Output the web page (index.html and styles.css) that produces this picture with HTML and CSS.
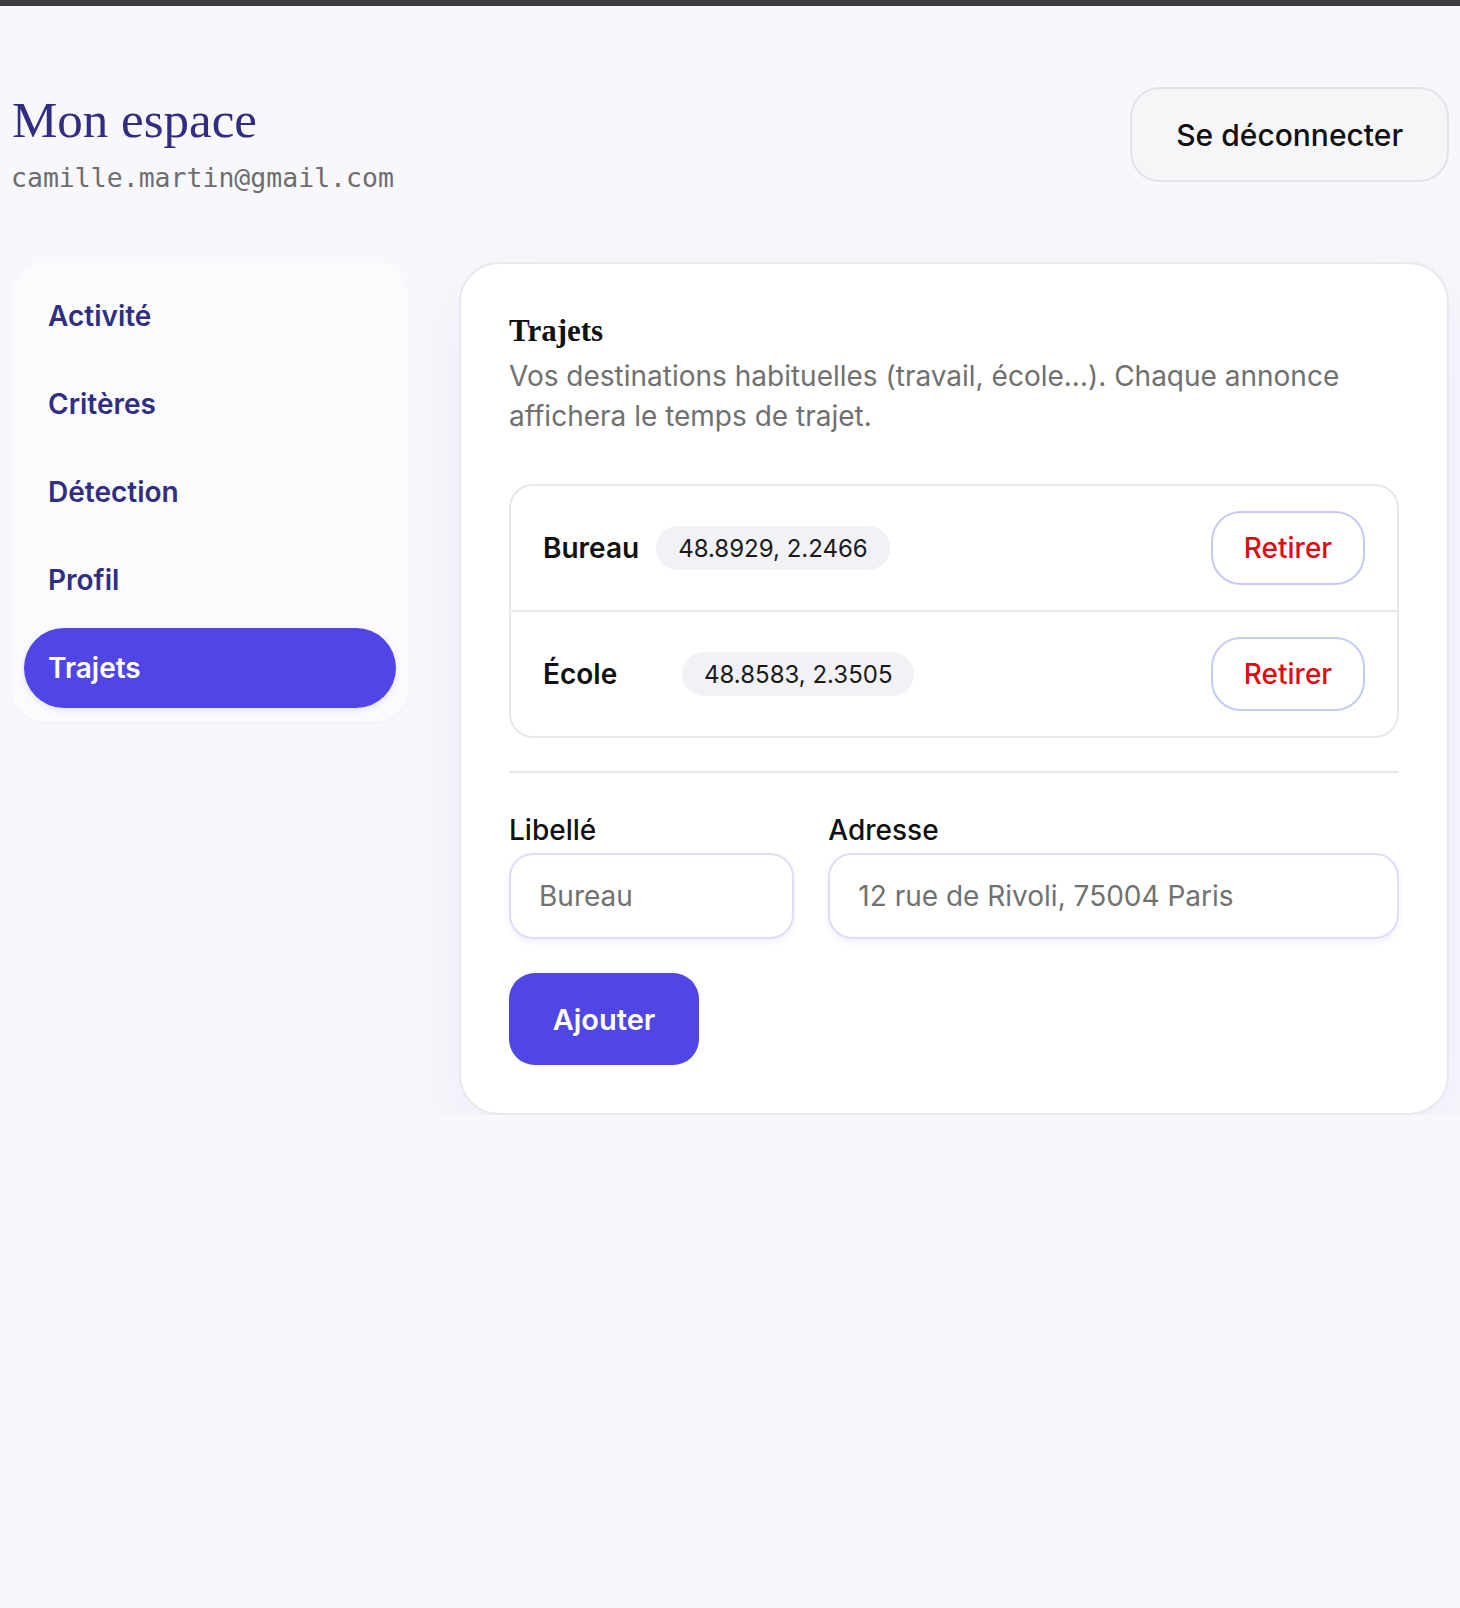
FILE: index.html
```html
<!DOCTYPE html>
<html lang="fr">
<head>
    <meta charset="UTF-8">
    <meta name="viewport" content="width=device-width, initial-scale=1.0">
    <title>Mon espace</title>
    <link rel="stylesheet" href="styles.css">
</head>
<body>
    <div class="top-bar"></div>
    <header class="page-header">
        <div class="account">
            <h1>Mon espace</h1>
            <p class="email">camille.martin@gmail.com</p>
        </div>
        <button class="logout-button">Se déconnecter</button>
    </header>
    <main class="layout">
        <nav class="side-nav">
            <a href="#" class="nav-item">Activité</a>
            <a href="#" class="nav-item">Critères</a>
            <a href="#" class="nav-item">Détection</a>
            <a href="#" class="nav-item">Profil</a>
            <a href="#" class="nav-item active">Trajets</a>
        </nav>
        <section class="panel">
            <h2>Trajets</h2>
            <p class="panel-intro">Vos destinations habituelles (travail, école...). Chaque annonce affichera le temps de trajet.</p>

            <ul class="places">
                <li class="place">
                    <span class="place-name">Bureau</span>
                    <span class="coords">48.8929, 2.2466</span>
                    <button class="remove-button">Retirer</button>
                </li>
                <li class="place">
                    <span class="place-name wide">École</span>
                    <span class="coords">48.8583, 2.3505</span>
                    <button class="remove-button">Retirer</button>
                </li>
            </ul>

            <hr class="separator">

            <form class="add-form">
                <div class="fields">
                    <label class="field">
                        <span>Libellé</span>
                        <input type="text" placeholder="Bureau">
                    </label>
                    <label class="field">
                        <span>Adresse</span>
                        <input type="text" placeholder="12 rue de Rivoli, 75004 Paris">
                    </label>
                </div>
                <button type="button" class="add-button">Ajouter</button>
            </form>
        </section>
    </main>
</body>
</html>
```

FILE: styles.css
```css
body {
    font-family: Inter, "Noto Sans", sans-serif;
    background-color: #f7f7fc;
    color: #111;
    margin: 0;
    padding: 0;
}

.top-bar {
    height: 6px;
    background-color: #3d3d3d;
}

.page-header {
    display: flex;
    justify-content: space-between;
    align-items: flex-start;
    padding: 81px 11px 0 11px;
}

.account {
    padding-top: 8px;
}

h1 {
    font-family: "Liberation Serif", "DejaVu Serif", serif;
    font-weight: 400;
    font-size: 51px;
    line-height: 1;
    color: #312e81;
    margin: 0 0 0 1px;
}

.email {
    font-family: "DejaVu Sans Mono", "Liberation Mono", monospace;
    font-size: 26.5px;
    line-height: 34px;
    color: #6e6e6e;
    margin: 15px 0 0 0;
}

.logout-button {
    height: 95px;
    padding: 0 44px;
    background-color: #f6f6f8;
    border: 2px solid #e3e3e7;
    border-radius: 30px;
    font-family: inherit;
    font-size: 30px;
    font-weight: 500;
    color: #111;
    cursor: pointer;
}

.layout {
    display: grid;
    grid-template-columns: 398px minmax(0, 1fr);
    gap: 50px;
    align-items: start;
    padding: 0 11px;
    margin-top: 67px;
}

.side-nav {
    display: flex;
    flex-direction: column;
    gap: 8px;
    padding: 14px 13px;
    background-color: #fbfbfe;
    border-radius: 34px;
    box-shadow: 0 1px 3px rgba(40, 40, 90, 0.03);
}

.nav-item {
    display: flex;
    align-items: center;
    height: 80px;
    padding: 0 24px;
    border-radius: 40px;
    font-size: 28px;
    font-weight: 600;
    color: #312e81;
    text-decoration: none;
}

.nav-item.active {
    background-color: #4f46e5;
    color: #fff;
    box-shadow: 0 2px 6px rgba(79, 70, 229, 0.15);
}

.panel {
    background-color: #fff;
    border: 2px solid #e8e8ed;
    border-radius: 40px;
    padding: 48px;
    box-shadow: 0 24px 60px rgba(79, 70, 229, 0.06);
}

h2 {
    font-family: "Liberation Serif", "DejaVu Serif", serif;
    font-size: 31px;
    font-weight: 700;
    line-height: 1.2;
    color: #111;
    margin: 0;
}

.panel-intro {
    font-size: 28px;
    line-height: 40px;
    color: #707070;
    margin: 7px 0 0 0;
}

.places {
    list-style: none;
    margin: 48px 0 0 0;
    padding: 0;
    border: 2px solid #e8e8ec;
    border-radius: 24px;
}

.place {
    display: flex;
    align-items: center;
    padding: 25px 32px;
}

.place + .place {
    border-top: 2px solid #e8e8ec;
}

.place-name {
    font-size: 28px;
    font-weight: 600;
    color: #111;
    margin-right: 17px;
}

.place-name.wide {
    min-width: 122px;
}

.coords {
    display: inline-flex;
    align-items: center;
    height: 44px;
    padding: 0 22px;
    background-color: #f1f1f6;
    border-radius: 22px;
    font-size: 24px;
    color: #1a1a1a;
}

.remove-button {
    margin-left: auto;
    width: 154px;
    height: 74px;
    background-color: #fff;
    border: 2px solid #c6caf6;
    border-radius: 30px;
    font-family: inherit;
    font-size: 28px;
    font-weight: 500;
    color: #e00b12;
    cursor: pointer;
}

.separator {
    border: none;
    border-top: 2px solid #e8e8ec;
    margin: 33px 0 0 0;
}

.add-form {
    margin-top: 40px;
}

.fields {
    display: grid;
    grid-template-columns: minmax(0, 1fr) minmax(0, 2fr);
    gap: 34px;
}

.field {
    display: flex;
    flex-direction: column;
    gap: 6px;
    min-width: 0;
}

.field span {
    font-size: 28px;
    font-weight: 500;
    line-height: 34px;
    color: #111;
}

.field input {
    width: 100%;
    min-width: 0;
    height: 86px;
    box-sizing: border-box;
    padding: 0 28px;
    border: 2px solid #dcdff7;
    border-radius: 24px;
    font-family: inherit;
    font-size: 28px;
    color: #111;
    background-color: #fff;
    box-shadow: 0 3px 6px rgba(79, 70, 229, 0.08);
}

.field input::placeholder {
    color: #717171;
}

.add-button {
    margin-top: 34px;
    width: 190px;
    height: 92px;
    background-color: #4f46e5;
    color: #fff;
    border: none;
    border-radius: 26px;
    font-family: inherit;
    font-size: 29px;
    font-weight: 600;
    cursor: pointer;
}
```
